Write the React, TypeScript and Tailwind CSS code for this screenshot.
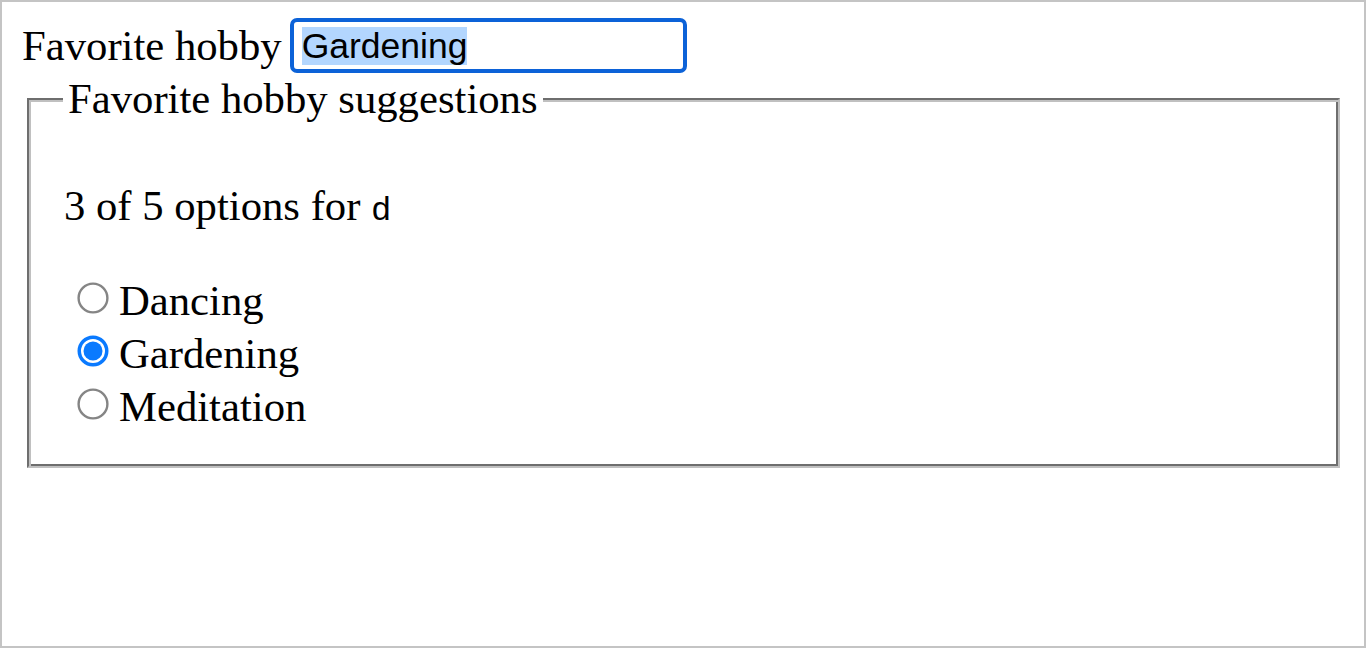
import React from 'react';

const options = [
  { label: 'Dancing', checked: false },
  { label: 'Gardening', checked: true },
  { label: 'Meditation', checked: false },
];

const Radio: React.FC<{ checked: boolean }> = ({ checked }) => (
  <svg width="32" height="32" viewBox="0 0 32 32" className="shrink-0">
    {checked ? (
      <>
        <circle cx="16" cy="16" r="13.75" fill="#fff" stroke="#0a7aff" strokeWidth="3.5" />
        <circle cx="16" cy="16" r="9.5" fill="#0a7aff" />
      </>
    ) : (
      <circle cx="16" cy="16" r="14.4" fill="#fff" stroke="#858585" strokeWidth="2.4" />
    )}
  </svg>
);

export default function App() {
  return (
    <div className="w-[1366px] h-[648px] border-2 border-[#c4c4c4] bg-white text-black font-['Liberation_Serif',serif] text-[42.7px] overflow-hidden">
      {/* field row */}
      <div className="flex items-center h-[55px] mt-[16px] ml-[20px]">
        <span className="leading-[47px]">Favorite hobby</span>
        <div className="ml-[8px] w-[397px] h-[55px] border-4 border-[#0c62d8] rounded-[7px] flex items-center pl-[8px]">
          <span className="bg-[#b3d6fe] font-['Liberation_Sans',Arial,sans-serif] text-[35.5px] leading-[38px]">
            Gardening
          </span>
        </div>
      </div>

      {/* suggestions - groove border: outer layer is the border, inner layer an inset shadow */}
      <fieldset className="mt-[2px] ml-[25px] w-[1313px] border-2 border-t-[#6e6e6e] border-l-[#6e6e6e] border-r-[#c0c0c0] border-b-[#c0c0c0] shadow-[inset_2px_2px_0_#c0c0c0,inset_-2px_-2px_0_#6e6e6e] pl-[34px] pr-[34px] pt-[17px] pb-[33px]">
        <legend className="px-[5px] leading-[47px] bg-white">Favorite hobby suggestions</legend>
        <p className="mt-[43px] leading-[47px] pl-[1px]">
          3 of 5 options for <code className="font-['Liberation_Mono',monospace] text-[34px]">d</code>
        </p>
        <div className="mt-[39px] flex flex-col">
          {options.map((o) => (
            <label key={o.label} className="flex items-center h-[53px] leading-[53px]">
              <span className="ml-[14px] mr-[10px] -mt-[6px] flex">
                <Radio checked={o.checked} />
              </span>
              <span>{o.label}</span>
            </label>
          ))}
        </div>
      </fieldset>
    </div>
  );
}
